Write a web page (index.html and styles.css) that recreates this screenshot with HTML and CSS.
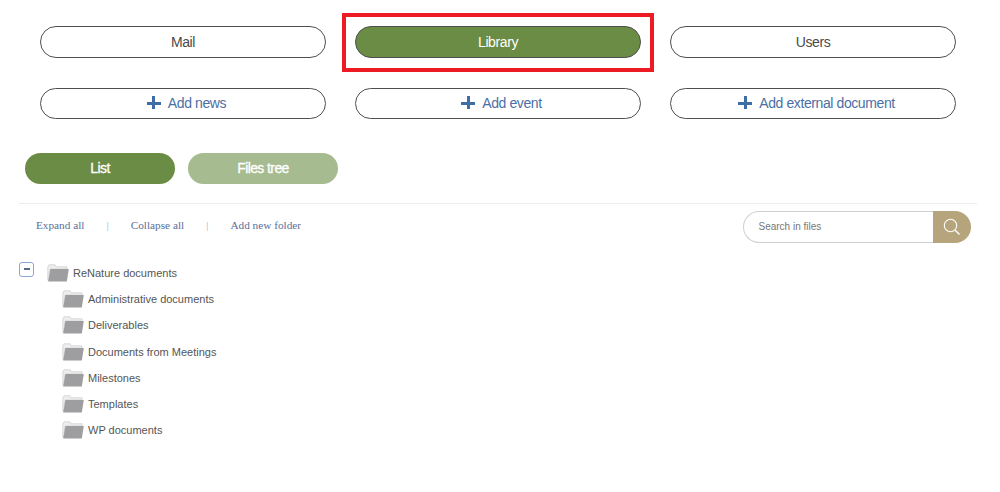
FILE: index.html
```html
<!DOCTYPE html>
<html lang="en">
<head>
    <meta charset="UTF-8">
    <title>Library</title>
    <link rel="stylesheet" href="styles.css">
</head>
<body>
    <svg class="sprite" width="0" height="0">
        <symbol id="folder" viewBox="0 0 22 18">
            <path d="M0.8 16 L0.8 3 L2 0.8 L8 0.8 L9 2.8 L20 2.8 L20 5 L3 5 L1.5 17 Z" fill="#eeeeee" stroke="#cfcfcf" stroke-width="0.8"/>
            <path d="M3.4 5 L21.8 5 L19.8 17.6 L1.2 17.6 Z" fill="#9e9ea0"/>
        </symbol>
    </svg>

    <div class="nav">
        <a class="pill">Mail</a>
        <div class="highlighted">
            <a class="pill pill-active">Library</a>
            <span class="red-box"></span>
        </div>
        <a class="pill">Users</a>
        <a class="pill pill-add"><span class="plus"></span>Add news</a>
        <a class="pill pill-add"><span class="plus"></span>Add event</a>
        <a class="pill pill-add"><span class="plus"></span>Add external document</a>
    </div>

    <div class="tabs">
        <a class="tab">List</a>
        <a class="tab tab-off">Files tree</a>
    </div>

    <div class="toolbar">
        <div class="links">
            <a>Expand all</a>
            <span class="sep sep-blue">|</span>
            <a>Collapse all</a>
            <span class="sep">|</span>
            <a>Add new folder</a>
        </div>
        <div class="search">
            <span class="search-input">Search in files</span>
            <span class="search-button">
                <svg width="20" height="20" viewBox="0 0 20 20" fill="none" stroke="#fff">
                    <circle cx="8.5" cy="8.5" r="6.2" stroke-width="1.1"/>
                    <path d="M13.2 13.2 L17.5 17.5" stroke-width="1.4"/>
                </svg>
            </span>
        </div>
    </div>

    <div class="tree">
        <div class="tree-root">
            <span class="toggle"><span class="minus"></span></span>
            <svg class="folder"><use href="#folder"/></svg>
            <span>ReNature documents</span>
        </div>
        <div class="tree-item"><svg class="folder"><use href="#folder"/></svg><span>Administrative documents</span></div>
        <div class="tree-item"><svg class="folder"><use href="#folder"/></svg><span>Deliverables</span></div>
        <div class="tree-item"><svg class="folder"><use href="#folder"/></svg><span>Documents from Meetings</span></div>
        <div class="tree-item"><svg class="folder"><use href="#folder"/></svg><span>Milestones</span></div>
        <div class="tree-item"><svg class="folder"><use href="#folder"/></svg><span>Templates</span></div>
        <div class="tree-item"><svg class="folder"><use href="#folder"/></svg><span>WP documents</span></div>
    </div>
</body>
</html>
```

FILE: styles.css
```css
body {
    margin: 0;
    background: #fff;
    font-family: "Liberation Sans", Arial, sans-serif;
    color: #4a4a4a;
}

.sprite {
    display: block;
}

.nav {
    display: grid;
    grid-template-columns: repeat(3, 286px);
    grid-template-rows: 32px 31px;
    gap: 30px 29px;
    padding: 26px 0 0 40px;
}

.highlighted {
    position: relative;
    display: flex;
}

.highlighted .pill {
    flex: 1;
}

.red-box {
    position: absolute;
    top: -13px;
    left: -13px;
    width: 304px;
    height: 51px;
    border: 4px solid #ed1c24;
}

.pill {
    display: flex;
    align-items: center;
    justify-content: center;
    box-sizing: border-box;
    border: 1px solid #4f4f4f;
    border-radius: 16px;
    font-size: 14px;
    letter-spacing: -0.4px;
}

.pill-active {
    background: #6b8c44;
    color: #fff;
}

.pill-add {
    padding: 0 0 1px 7px;
    color: #4a6fa5;
}

.plus {
    position: relative;
    width: 14px;
    height: 14px;
    margin-right: 7px;
}

.plus::before,
.plus::after {
    content: "";
    position: absolute;
    background: #3f6da6;
}

.plus::before {
    left: 0;
    right: 0;
    top: 6px;
    height: 3px;
}

.plus::after {
    top: 0;
    bottom: 1px;
    left: 5.5px;
    width: 3px;
}

.tabs {
    display: flex;
    gap: 13px;
    margin: 34px 0 0 25px;
}

.tab {
    width: 150px;
    height: 31px;
    line-height: 31px;
    border-radius: 16px;
    background: #6b8c44;
    color: #fff;
    font-size: 14px;
    -webkit-text-stroke: 0.3px #fff;
    letter-spacing: -0.6px;
    text-align: center;
}

.tab-off {
    background: #a6bb8f;
}

.toolbar {
    display: flex;
    justify-content: space-between;
    align-items: flex-start;
    margin: 19px 23px 0 19px;
    padding: 7px 6px 0 17px;
    border-top: 1px solid #ececec;
}

.links {
    display: flex;
    gap: 22px;
    padding-top: 8px;
    font-family: "Liberation Serif", "Times New Roman", serif;
    font-size: 11.25px;
    color: #5a6f9a;
}

.sep {
    color: #c9a9b8;
}

.sep-blue {
    color: #86b6d8;
}

.search {
    display: flex;
    width: 228px;
    height: 32px;
    box-sizing: border-box;
}

.search-input {
    flex: 1;
    box-sizing: border-box;
    border: 1.5px solid #cfcfcf;
    border-right: none;
    border-radius: 16px 0 0 16px;
    padding-left: 14.5px;
    font-size: 10px;
    line-height: 30px;
    color: #777;
}

.search-button {
    display: flex;
    align-items: center;
    justify-content: center;
    width: 38px;
    background: #b5a47c;
    border-radius: 0 16px 16px 0;
}

.tree {
    margin: 17px 0 0 19px;
    font-size: 11px;
    color: #555;
}

.tree-root,
.tree-item {
    display: flex;
    align-items: center;
    height: 26.2px;
}

.tree-item {
    padding-left: 43px;
}

.toggle {
    display: flex;
    align-items: center;
    justify-content: center;
    box-sizing: border-box;
    width: 15px;
    height: 15px;
    margin: -8px 13px 0 0;
    border: 1px solid #8ba6cf;
    border-radius: 3px;
}

.minus {
    width: 6px;
    height: 1.5px;
    background: #54698c;
}

.folder {
    width: 22px;
    height: 18px;
    margin-right: 4px;
}
```
